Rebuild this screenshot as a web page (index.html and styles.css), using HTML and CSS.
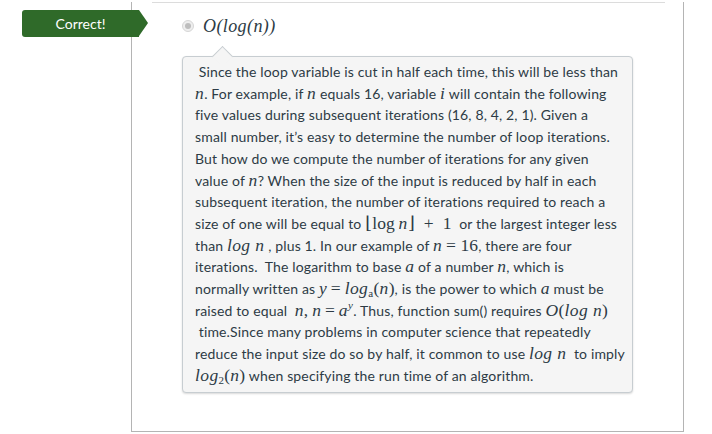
FILE: index.html
```html
<!DOCTYPE html>
<html>
<head>
<meta charset="utf-8">
<link rel="stylesheet" href="styles.css">
</head>
<body>
<div class="question">
  <div class="correct-label">Correct!</div>
  <div class="separator"></div>
  <div class="answer">
    <span class="radio"><span class="dot"></span></span>
    <span class="m big">O(log(n))</span>
  </div>
  <div class="callout">
    <p>&nbsp;Since the loop variable is cut in half each time, this will be less than<br><span class="m">n</span>. For example, if <span class="m">n</span> equals 16, variable <span class="m">i</span> will contain the following<br>five values during subsequent iterations (16, 8, 4, 2, 1). Given a<br>small number, it’s easy to determine the number of loop iterations.<br>But how do we compute the number of iterations for any given<br>value of <span class="m">n</span>? When the size of the input is reduced by half in each<br>subsequent iteration, the number of iterations required to reach a<br>size of one will be equal to <span class="mr">⌊log&thinsp;<span class="m">n</span>⌋&nbsp;&nbsp;+&nbsp;&nbsp;1</span>&nbsp; or the largest integer less<br>than <span class="m">log n</span> , plus 1. In our example of <span class="m">n</span> <span class="mr">=&nbsp;16</span>, there are four<br>iterations.&nbsp; The logarithm to base <span class="m">a</span> of a number <span class="m">n</span>, which is<br>normally written as <span class="m">y</span> <span class="mr">=</span> <span class="m">log<sub>a</sub></span><span class="mr">(</span><span class="m">n</span><span class="mr">)</span>, is the power to which <span class="m">a</span> must be<br>raised to equal&nbsp; <span class="m">n</span><span class="mr">,</span> <span class="m">n</span> <span class="mr">=</span> <span class="m">a<sup>y</sup></span>. Thus, function sum() requires <span class="m">O</span><span class="mr">(</span><span class="m">log n</span><span class="mr">)</span><br>&nbsp;time.Since many problems in computer science that repeatedly<br>reduce the input size do so by half, it common to use <span class="m">log n</span>&nbsp; to imply<br><span class="m">log</span><span class="mr"><sub>2</sub>(</span><span class="m">n</span><span class="mr">)</span> when specifying the run time of an algorithm.</p>
  </div>
</div>
</body>
</html>
```
FILE: styles.css
```css
html, body {
  margin: 0;
  padding: 0;
  background: #ffffff;
}
body {
  font-family: Lato, "Noto Sans", sans-serif;
  color: #2d3b45;
}
.question {
  position: relative;
  margin-left: 131px;
  width: 551px;
  height: 429px;
  border: 1px solid #b4b4b4;
  border-top: none;
}
.correct-label {
  position: absolute;
  left: -110px;
  top: 8px;
  width: 117px;
  height: 27px;
  line-height: 27px;
  background: #2f6a29;
  color: #ffffff;
  font-size: 14px;
  text-align: center;
  border-radius: 3px 0 0 3px;
}
.correct-label::after {
  content: "";
  position: absolute;
  right: -9px;
  top: 0;
  border-top: 13.5px solid transparent;
  border-bottom: 13.5px solid transparent;
  border-left: 9px solid #2f6a29;
}
.separator {
  margin: 2px 18px 0 20px;
  border-top: 1px solid #dcdcdc;
}
.answer {
  display: flex;
  align-items: center;
  gap: 9px;
  margin: 13px 0 0 50px;
  height: 20px;
}
.radio {
  width: 12px;
  height: 12px;
  border-radius: 50%;
  background: #eeeeee;
  border: 1px solid #d6d6d6;
  box-sizing: border-box;
  display: flex;
  align-items: center;
  justify-content: center;
}
.dot {
  width: 6px;
  height: 6px;
  border-radius: 50%;
  background: #bdbdbd;
}
.m {
  font-family: "Liberation Serif", "DejaVu Serif", serif;
  font-style: italic;
  font-size: 17.5px;
  letter-spacing: 0.4px;
}
.mr {
  font-family: "Liberation Serif", "DejaVu Serif", serif;
  font-size: 17.5px;
}
.big {
  font-size: 18px;
  color: #2d3b45;
}
.m sub, .mr sub {
  font-size: 11px;
  font-style: normal;
  vertical-align: -3px;
  line-height: 0;
}
.m sup {
  font-size: 11px;
  vertical-align: 7px;
  line-height: 0;
}
.callout {
  position: relative;
  margin: 20px 0 0 50px;
  width: 449px;
  background: #f5f5f5;
  border: 1px solid #c7cdd1;
  border-radius: 4px;
  box-shadow: 0 1px 2px rgba(0, 0, 0, 0.15);
}
.callout::before {
  content: "";
  position: absolute;
  left: 32px;
  top: -8px;
  width: 14px;
  height: 14px;
  background: #f5f5f5;
  border-left: 1px solid #c7cdd1;
  border-top: 1px solid #c7cdd1;
  transform: rotate(45deg);
}
.callout p {
  margin: 0;
  padding: 4px 12px 5px 12px;
  font-size: 14px;
  letter-spacing: 0.15px;
  line-height: 21.7px;
  white-space: nowrap;
}
```
